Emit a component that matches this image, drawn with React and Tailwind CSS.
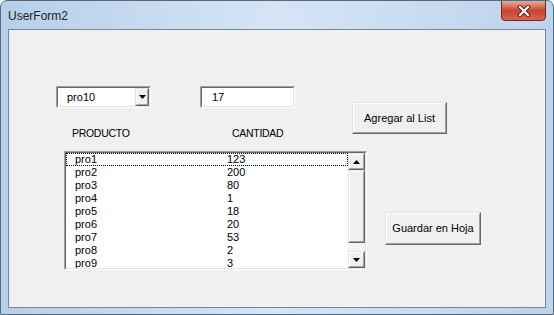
import React from 'react';

const rows = [
  ['pro1', '123'],
  ['pro2', '200'],
  ['pro3', '80'],
  ['pro4', '1'],
  ['pro5', '18'],
  ['pro6', '20'],
  ['pro7', '53'],
  ['pro8', '2'],
  ['pro9', '3'],
];

// classic 3D raised edge
const Raised = ({ className = '', children }) => (
  <div className={`border border-t-[#e3e3e3] border-l-[#e3e3e3] border-r-[#696969] border-b-[#696969] ${className}`}>
    <div className="w-full h-full border border-t-white border-l-white border-r-[#a0a0a0] border-b-[#a0a0a0] bg-[#f0f0f0] flex items-center justify-center">
      {children}
    </div>
  </div>
);

// classic 3D sunken edge
const Sunken = ({ className = '', children }) => (
  <div className={`border border-t-[#a0a0a0] border-l-[#a0a0a0] border-r-white border-b-white ${className}`}>
    <div className="w-full h-full border border-t-[#696969] border-l-[#696969] border-r-[#e3e3e3] border-b-[#e3e3e3] bg-white flex">
      {children}
    </div>
  </div>
);

const ArrowDown = () => (
  <svg width="7" height="4" viewBox="0 0 7 4">
    <path d="M0 0h7L3.5 4z" fill="#000" />
  </svg>
);

const ArrowUp = () => (
  <svg width="7" height="4" viewBox="0 0 7 4">
    <path d="M0 4h7L3.5 0z" fill="#000" />
  </svg>
);

export default function App() {
  return (
    <div className="w-[554px] h-[315px] flex flex-col rounded-t-[7px] border border-[#5b6778] bg-linear-to-r from-[#b6cfe9] via-[#d5e5f6] to-[#bcd3ec] font-['Liberation_Sans',Arial,sans-serif] text-black overflow-hidden">
      {/* Title bar */}
      <div className="h-[28px] flex items-start shrink-0">
        <div className="pl-[7px] pt-[8px] text-[12px] leading-[14px] text-[#1e1e1e]">UserForm2</div>
        <div className="ml-auto mr-[7px] -mt-px w-[45px] h-[21px] rounded-b-[4px] border border-[#6d2a22] bg-linear-to-b from-[#e9a99a] via-[#c8432f] to-[#d8644c] flex items-center justify-center">
          <svg width="14" height="12" viewBox="0 0 14 12">
            <path d="M3 2l8 8M11 2l-8 8" stroke="#5a1c14" strokeWidth="4" strokeLinecap="square" />
            <path d="M3 2l8 8M11 2l-8 8" stroke="#fff" strokeWidth="2.2" strokeLinecap="square" />
          </svg>
        </div>
      </div>

      {/* Client area */}
      <div className="mx-[7px] h-[279px] border border-[#7b8899] bg-[#f0f0f0] flex pl-[47px] pt-[56px] text-[11px]">
        {/* Left column */}
        <div className="w-[296px] flex flex-col">
          <div className="flex h-[22px]">
            <Sunken className="w-[95px] h-[22px]">
              <div className="flex-1 pl-[9px] leading-[18px]">pro10</div>
              <Raised className="w-[14px] h-full">
                <ArrowDown />
              </Raised>
            </Sunken>
            <Sunken className="ml-[49px] w-[95px] h-[22px]">
              <div className="flex-1 pl-[10px] leading-[18px]">17</div>
            </Sunken>
          </div>

          <div className="mt-[19px] h-[13px] flex text-[10.5px] leading-[13px] tracking-[-0.3px]">
            <div className="w-[176px] pl-[16px]">PRODUCTO</div>
            <div>CANTIDAD</div>
          </div>

          <Sunken className="mt-[11px] ml-[8px] w-[303px] h-[119px] shrink-0">
            <div className="flex-1 overflow-hidden">
              {rows.map(([p, c], i) => (
                <div
                  key={p}
                  className={`flex h-[13px] leading-[13px] pl-[9px] ${i === 0 ? 'outline-1 outline-dotted outline-black -outline-offset-1' : ''}`}
                >
                  <div className="w-[152px]">{p}</div>
                  <div>{c}</div>
                </div>
              ))}
            </div>
            <div className="w-[17px] flex flex-col">
              <Raised className="h-[17px] w-full shrink-0">
                <ArrowUp />
              </Raised>
              <Raised className="h-[73px] w-full shrink-0" />
              <div className="flex-1 bg-[#f3f3f3]" />
              <Raised className="h-[17px] w-full shrink-0">
                <ArrowDown />
              </Raised>
            </div>
          </Sunken>
        </div>

        {/* Right column */}
        <div className="flex flex-col items-start">
          <Raised className="mt-[16px] w-[95px] h-[32px]">
            <span>Agregar al List</span>
          </Raised>
          <Raised className="mt-[78px] ml-[33px] w-[96px] h-[33px]">
            <span>Guardar en Hoja</span>
          </Raised>
        </div>
      </div>
    </div>
  );
}
